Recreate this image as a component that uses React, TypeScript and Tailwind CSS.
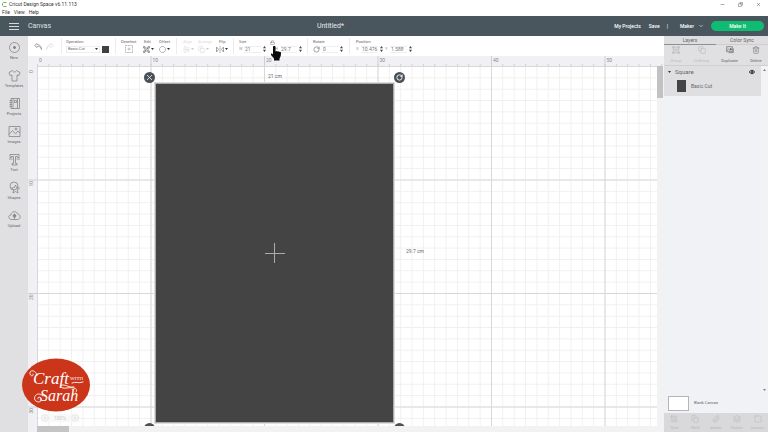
import React from 'react';
import {
  AlignCenterHorizontal, ChevronDown, CirclePlus, Copy, Eye, Group, Layers, Lock, Minus,
  Octagon, Paperclip, RotateCw, Square, Trash2, Ungroup, X, Combine,
} from 'lucide-react';

const TOOLS = [
  { label: 'New', art: <><circle cx="13" cy="13" r="10" /><path d="M13 10v6M10 13h6" strokeWidth="3" /></> },
  { label: 'Templates', art: <path d="M9 3L2 7l2 6 4-1v12h10V12l4 1 2-6-7-4c-2 4-6 4-8 0z" /> },
  { label: 'Projects', art: <><path d="M6 3h17v20H6zM10 3v20M3 7h5M3 11h5M3 15h5M3 19h5M19 3v20" /><path d="M13 7h4v4h-4z" /></> },
  { label: 'Images', art: <><path d="M2 3h22v20H2zM2 19l7-8 6 7 5-6 4 4" /><circle cx="16" cy="8" r="2" /></> },
  { label: 'Text', art: <><path d="M4 3h18v6h-3V7h-4v14h3v3H8v-3h3V7H7v2H4z" /><path d="M2 12h7M17 12h7" /></> },
  { label: 'Shapes', art: <><circle cx="12" cy="10" r="8" /><path d="M15 8l2 5 6 1-4 4 1 6-5-3-5 3 1-6-4-4 6-1z" /></> },
  { label: 'Upload', art: <><path d="M7 21c-7 0-7-9-1-9 0-8 12-9 13-2 7 0 7 11 0 11z" /><path d="M13 19v-7M10 15l3-4 3 4" strokeWidth="3" /></> },
];

const DuplicateIcon = () => (
  <svg viewBox="0 0 24 24" className="size-2" fill="none" stroke="currentColor" strokeWidth="2">
    <path d="M2 2h17v15H2zM2 14l5-5 5 5M8 20h14V7" />
    <path d="M14 6v7M11 10h7" strokeWidth="3" />
  </svg>
);

const GroupIcon = () => (
  <svg viewBox="0 0 24 24" className="size-2" fill="none" stroke="currentColor" strokeWidth="2">
    <path d="M4 4h16v16H4zM1 1h5v5H1zM18 1h5v5h-5zM1 18h5v5H1zM18 18h5v5h-5zM8 9h8v6H8z" />
  </svg>
);

const LAYER_ACTIONS = [
  { label: 'Group', icon: <GroupIcon />, enabled: false },
  { label: 'UnGroup', icon: <Copy size={8} strokeWidth={2} />, enabled: false },
  { label: 'Duplicate', icon: <DuplicateIcon />, enabled: true },
  { label: 'Delete', icon: <Trash2 size={8} strokeWidth={1.5} />, enabled: true },
];

const COMBINE_ACTIONS = [
  { label: 'Slice', icon: Combine },
  { label: 'Weld', icon: Copy },
  { label: 'Attach', icon: Paperclip },
  { label: 'Flatten', icon: Layers },
  { label: 'Contour', icon: Square },
];

// ten centimetres on the mat
const MAJOR = 113.5;
const MINOR = 11.35;
const MARKS = [0, 10, 20, 30, 40, 50];

const Caret = () => (
  <svg viewBox="0 0 6 4" className="w-[3px] h-[2px] shrink-0"><path d="M0 0h6L3 4z" fill="#333" /></svg>
);

const Spinner = () => (
  <svg viewBox="0 0 4 8" className="w-[3px] h-[6px] shrink-0" fill="#444"><path d="M0 3h4L2 0zM0 5h4L2 8z" /></svg>
);

const App: React.FC = () => {
  return (
    <div className="h-screen flex flex-col overflow-hidden bg-white font-['Roboto','Liberation_Sans',sans-serif] text-[5px] leading-[6px] text-[#666]">
      <WindowBar />
      <Header />
      <div className="flex flex-1 min-h-0">
        <Sidebar />
        <main className="flex-1 min-w-0 flex flex-col">
          <Toolbar />
          <Workspace />
        </main>
        <LayersPanel />
      </div>
    </div>
  );
};

const WindowBar = () => (
  <div className="h-4 shrink-0 text-[#333]">
    <div className="h-2 flex items-center justify-between pl-[2px] pr-[7px]">
      <div className="flex items-center gap-[2px]">
        <svg viewBox="0 0 10 10" className="size-[5px]"><path d="M9 1H3L1 3v4l2 2h6" fill="none" stroke="#6cc04a" strokeWidth="2" /></svg>
        <span>Cricut Design Space v6.11.113</span>
      </div>
      <div className="flex gap-[13px]">
        <button aria-label="Minimize"><Minus size={5} /></button>
        <button aria-label="Restore"><Copy size={5} className="-scale-x-100" /></button>
        <button aria-label="Close"><X size={5} /></button>
      </div>
    </div>
    <nav className="h-2 flex items-center gap-[4px] pl-[2px]">
      <button>File</button>
      <button>View</button>
      <button>Help</button>
    </nav>
  </div>
);

const Header = () => (
  <header className="h-5 shrink-0 grid grid-cols-[1fr_auto_1fr] items-center bg-[#4a565e] text-white pl-[9px] pr-1">
    <div className="flex items-center gap-[9px]">
      <button aria-label="Menu" className="w-[10px] flex flex-col gap-[2px]">
        <span className="h-px w-full bg-[#d5d9dc]" />
        <span className="h-px w-full bg-[#d5d9dc]" />
        <span className="h-px w-full bg-[#d5d9dc]" />
      </button>
      <span className="text-[7px] leading-[8px] text-[#dde1e3]">Canvas</span>
    </div>
    <h1 className="text-[7px] leading-[8px] text-[#e8eaeb] pr-[112px]">Untitled*</h1>
    <div className="flex items-center justify-end font-medium">
      <button className="mr-2">My Projects</button>
      <button className="mr-[7px]">Save</button>
      <span className="mr-[12px]">|</span>
      <button className="flex items-center gap-[4px] mr-[7px]">Maker <ChevronDown size={6} /></button>
      <button className="w-[53px] h-[10px] rounded-full bg-[#0fbd72]">Make It</button>
    </div>
  </header>
);

const Sidebar = () => (
  <aside className="w-7 shrink-0 flex flex-col bg-[#e0e0e2] pt-[5px]">
    {TOOLS.map(({ label, art }) => (
      <button key={label} className="h-7 flex flex-col items-center gap-px text-[4px] leading-[5px]">
        <svg viewBox="0 0 26 26" className="size-[13px]" fill="none" stroke="#858589" strokeWidth="1.6">{art}</svg>
        {label}
      </button>
    ))}
  </aside>
);

const Field = ({ id, label, value }: { id: string; label: string; value: string }) => (
  <div className="flex items-center gap-[2px]">
    <label htmlFor={id} className="w-[3px] text-[4px] text-[#999]">{label}</label>
    <input id={id} defaultValue={value} className="w-[17px] h-[7px] pl-px border-y border-[#eee] text-[#777]" />
    <Spinner />
  </div>
);

const ToolGroup = ({ label, className = '', children }: { label: string; className?: string; children: React.ReactNode }) => (
  <div className={`flex flex-col shrink-0 ${className}`}>
    <span className="text-[4px] leading-[5px] whitespace-nowrap">{label}</span>
    <div className="h-2 mt-px flex items-center gap-[2px]">{children}</div>
  </div>
);

const Divider = () => <span className="w-px h-4 shrink-0 bg-[#ececee]" />;

const Toolbar = () => (
  <div className="h-5 shrink-0 flex items-center bg-white pl-[6px]">
    <button aria-label="Undo">
      <svg viewBox="0 0 16 14" className="w-2 h-[7px]" fill="none" stroke="#888" strokeWidth="1.4"><path d="M6 1L1 5l5 4V7c5-1 8 1 9 6 0-7-4-10-9-10z" /></svg>
    </button>
    <button aria-label="Redo" className="ml-[4px] mr-[7px]">
      <svg viewBox="0 0 16 14" className="w-2 h-[7px]" fill="none" stroke="#dcdcdc" strokeWidth="1.4"><path d="M10 1l5 4-5 4V7c-5-1-8 1-9 6 0-7 4-10 9-10z" /></svg>
    </button>
    <Divider />
    <ToolGroup label="Operation" className="ml-1 w-[49px]">
      <div className="w-[34px] h-[7px] flex items-center border border-[#eee] pr-px">
        <select aria-label="Operation" className="appearance-none flex-1 min-w-0 h-[6px] pl-px text-[4px]">
          <option>Basic Cut</option>
        </select>
        <Caret />
      </div>
      <button aria-label="Colour" className="size-[7px] bg-[#414141]" />
    </ToolGroup>
    <Divider />
    <ToolGroup label="Deselect" className="ml-[5px] w-[23px]">
      <button aria-label="Deselect" className="ml-[4px]">
        <svg viewBox="0 0 16 16" className="size-2" fill="none" stroke="#aaa" strokeWidth="1.5"><path d="M1 1h14v14H1z" strokeDasharray="4 1" /><path d="M8 5v6M5 8h6" /></svg>
      </button>
    </ToolGroup>
    <ToolGroup label="Edit" className="w-[15px]">
      <button aria-label="Edit" className="-ml-px flex items-center gap-px">
        <svg viewBox="0 0 14 14" className="size-[7px]" fill="none" stroke="#777" strokeWidth="1.4"><path d="M4 4h6v6H4zM1 1h3v3H1zM10 1h3v3h-3zM1 10h3v3H1zM10 10h3v3h-3zM4 10l6-6" /></svg>
        <Caret />
      </button>
    </ToolGroup>
    <ToolGroup label="Offset" className="w-[17px]">
      <button aria-label="Offset" className="flex items-center gap-px"><Octagon size={7} strokeWidth={2.5} className="text-[#999]" /><Caret /></button>
    </ToolGroup>
    <Divider />
    <ToolGroup label="Align" className="ml-[6px] w-[15px] opacity-25">
      <button aria-label="Align" className="flex items-center gap-px"><AlignCenterHorizontal size={7} /><Caret /></button>
    </ToolGroup>
    <ToolGroup label="Arrange" className="w-[21px] opacity-25">
      <button aria-label="Arrange" className="flex items-center gap-px"><Copy size={7} /><Caret /></button>
    </ToolGroup>
    <ToolGroup label="Flip" className="w-[14px]">
      <button aria-label="Flip" className="-ml-[3px] flex items-center gap-px">
        <svg viewBox="0 0 16 14" className="w-2 h-[7px]" fill="none" stroke="#888" strokeWidth="1.5"><path d="M1 2v10l4-5zM15 2v10l-4-5z" /><path d="M8 0v14" strokeDasharray="3 1" /></svg>
        <Caret />
      </button>
    </ToolGroup>
    <Divider />
    <ToolGroup label="Size" className="ml-[5px] w-[68px]">
      <Field id="w" label="W" value="21" />
      <button aria-label="Lock proportions" className="relative ml-[2px] -mr-[2px] self-start">
        <Lock size={5} className="-mt-[5px]" />
        <Hand />
      </button>
      <Field id="h" label="H" value="29.7" />
    </ToolGroup>
    <Divider />
    <ToolGroup label="Rotate" className="ml-[5px] w-[36px]">
      <RotateCw size={7} strokeWidth={2} className="shrink-0" />
      <input aria-label="Rotate" defaultValue="0" className="w-[16px] h-[7px] pl-px border-y border-[#eee] text-[#777]" />
      <Spinner />
    </ToolGroup>
    <Divider />
    <ToolGroup label="Position" className="ml-[6px]">
      <Field id="x" label="X" value="10.476" />
      <Field id="y" label="Y" value="1.588" />
    </ToolGroup>
  </div>
);

const Hand = () => (
  <svg viewBox="0 0 20 30" className="absolute left-px top-px w-[10px] h-[15px] z-20">
    <path d="M4 2c0-3 5-3 5 0v9c1-2 3-1 4 0 1-1 3 0 3 1 2-1 4 0 4 2 0 5-1 8-3 11v4H6v-4L0 18c-1-3 2-4 4-1z" fill="#0a0a0a" />
  </svg>
);

const Workspace = () => (
  <div className="flex-1 min-h-0 flex flex-col">
    <svg className="w-full h-[10px] shrink-0 bg-[#f1f1f5]">
      <defs>
        <pattern id="tick" x="9" width={MINOR} height="10" patternUnits="userSpaceOnUse"><path d="M.5 8v2" stroke="#cfcfd6" /></pattern>
      </defs>
      <rect x="9" width="100%" height="10" fill="url(#tick)" />
      {MARKS.map((m, i) => (
        <g key={m}>
          {i > 0 && <path d={`M${9.5 + i * MAJOR} 0v10`} stroke="#cdced4" />}
          <text x={11 + i * MAJOR} y="6" fontSize="5" fill="#888">{m}</text>
        </g>
      ))}
    </svg>
    <div className="flex-1 min-h-0 flex">
      <svg className="w-[9px] h-full shrink-0 bg-[#f1f1f5]">
        {MARKS.slice(0, 4).map((m, i) => (
          <g key={m}>
            {i > 0 && <path d={`M0 ${.5 + i * MAJOR}h9`} stroke="#cdced4" />}
            <text transform={`translate(5 ${7 + i * MAJOR}) rotate(-90)`} fontSize="5" fill="#888">{m}</text>
          </g>
        ))}
      </svg>
      <div className="flex-1 min-w-0 flex flex-col">
        <Mat />
        <div className="h-[6px] shrink-0 bg-[#f2f2f2]"><div className="h-full w-8 bg-[#c4c4c4]" /></div>
      </div>
      <div className="w-[7px] shrink-0 bg-[#f2f2f2]"><div className="h-8 w-[6px] bg-[#c2c2c2]" /></div>
    </div>
  </div>
);

const Mat = () => (
  <div className="relative flex-1 min-h-0">
    <svg className="absolute inset-0 size-full">
      <defs>
        <pattern id="cm" width={MINOR} height={MINOR} patternUnits="userSpaceOnUse">
          <path d="M.5 0v11.35M0 .5h11.35" stroke="#f0f0f0" fill="none" />
        </pattern>
        <pattern id="dm" width={MAJOR} height={MAJOR} patternUnits="userSpaceOnUse">
          <path d={`M.5 0v${MAJOR}M0 .5h${MAJOR}`} stroke="#d8d8da" fill="none" />
        </pattern>
      </defs>
      <rect width="100%" height="100%" fill="url(#cm)" />
      <rect width="100%" height="100%" fill="url(#dm)" />
    </svg>
    <div className="absolute left-[118px] top-[17px] w-[239px] h-[340px] bg-[#444] border border-[#aaa] outline outline-[#dedede]">
      <svg viewBox="0 0 20 20" className="absolute left-[109px] top-[159px] size-5"><path d="M9.5 0v20M0 10.5h20" stroke="#aaa" /></svg>
    </div>
    <span className="absolute left-[231px] top-[7px]">21 cm</span>
    <span className="absolute left-[369px] top-[182px]">29.7 cm</span>
    <button aria-label="Remove" className="absolute left-[107px] top-[6px] size-[11px] rounded-full bg-[#4a5158] text-white flex items-center justify-center"><X size={9} /></button>
    <button aria-label="Rotate" className="absolute left-[357px] top-[6px] size-[11px] rounded-full bg-[#4a5158] text-white flex items-center justify-center"><RotateCw size={7} strokeWidth={3} /></button>
    <div className="absolute left-[107px] bottom-0 w-[11px] h-[3px] overflow-hidden"><div className="size-[11px] rounded-full bg-[#4a5158]" /></div>
    <div className="absolute left-[357px] bottom-0 w-[11px] h-[3px] overflow-hidden"><div className="size-[11px] rounded-full bg-[#4a5158]" /></div>
    <div className="absolute left-1 bottom-1 flex items-center gap-[5px] bg-[#f8f8f8] text-[#ccc]"><CirclePlus size={8} strokeWidth={1} />100%<CirclePlus size={8} strokeWidth={1} /></div>
    <Logo />
  </div>
);

const Logo = () => (
  <svg viewBox="0 0 68 54" className="absolute -left-[15px] top-[292px] w-[68px] h-[54px] z-10">
    <ellipse cx="34" cy="27" rx="34" ry="26.5" fill="#cb3519" />
    <g fill="#fff" fontFamily="'Liberation Serif', serif">
      <text x="11" y="26" fontSize="17" fontStyle="italic">Craft</text>
      <text x="48" y="22" fontSize="5">WITH</text>
      <text x="18" y="43" fontSize="16" fontStyle="italic">Sarah</text>
    </g>
    <g fill="none" stroke="#fff" strokeWidth=".9" strokeLinecap="round">
      <path d="M15 17c-2-6-8-5-7-1 1 3 4 2 3 0" />
      <path d="M50 25c4-2 6 1 11-1" />
      <path d="M54 34c3-4-4-5-9-4-7 1-8-3-4-3 4 0 6 3 11 2" />
      <path d="M21 38c-5-5-10 0-8 4 3 4 8 1 6-2-2-2-4 0-3 1" />
    </g>
  </svg>
);

const LayersPanel = () => (
  <aside className="w-[104px] shrink-0 flex flex-col bg-[#f1f2f6]">
    <div className="h-[9px] shrink-0 grid grid-cols-2 bg-[#dedee0]" role="tablist">
      <button role="tab" aria-selected="true" className="border-b border-[#8a9095]">Layers</button>
      <button role="tab" aria-selected="false" className="border-b border-[#cfcfd2]">Color Sync</button>
    </div>
    <div className="h-[21px] shrink-0 grid grid-cols-[24px_27px_29px_24px] bg-[#e0e0e2] border-b border-[#cfcfd2]">
      {LAYER_ACTIONS.map(({ label, icon, enabled }) => (
        <button key={label} disabled={!enabled} className="flex flex-col items-center pt-px gap-[4px] text-[4px] leading-[5px] disabled:opacity-30">
          {icon}
          {label}
        </button>
      ))}
    </div>
    <div className="flex flex-1 min-h-0">
      <div className="flex-1">
        <div className="h-[30px] bg-[#dfdfe1]">
          <div className="h-3 flex items-center gap-1 pl-1 pr-[6px] text-[6px]">
            <Caret />
            <span className="flex-1">Square</span>
            <button aria-label="Toggle visibility"><Eye size={6} strokeWidth={4} className="text-[#333]" /></button>
          </div>
          <div className="flex items-center gap-[5px] pl-[13px] pt-[2px]">
            <span className="w-[9px] h-3 bg-[#444]" />
            <span>Basic Cut</span>
          </div>
        </div>
      </div>
      <div className="w-[7px] bg-[#f3f3f5] flex flex-col items-center justify-between py-[3px]">
        <span className="rotate-180 flex opacity-60"><Caret /></span>
        <span className="flex opacity-60"><Caret /></span>
      </div>
    </div>
    <div className="h-[19px] shrink-0 flex items-center gap-[5px] pl-1 pb-px text-[4px]">
      <span className="w-[21px] h-[15px] bg-white border border-[#b5b5b8]" />
      Blank Canvas
    </div>
    <div className="h-[19px] shrink-0 grid grid-cols-5 bg-[#d9d9dc]">
      {COMBINE_ACTIONS.map(({ label, icon: Icon }) => (
        <button key={label} disabled className="flex flex-col items-center pt-[2px] gap-[2px] text-[4px] leading-[5px] opacity-30">
          <Icon size={8} strokeWidth={1.5} />
          {label}
        </button>
      ))}
    </div>
  </aside>
);

export default App;
